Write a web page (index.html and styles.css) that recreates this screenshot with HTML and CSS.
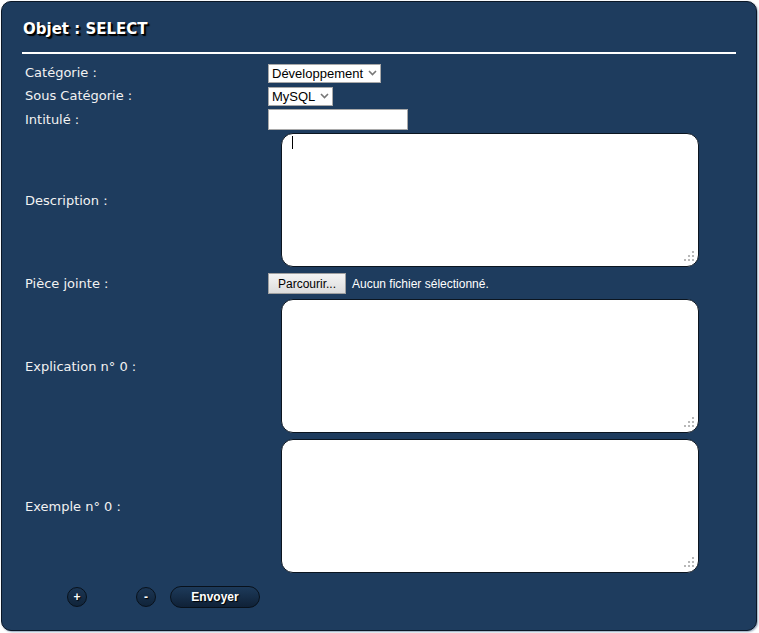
FILE: index.html
```html
<!DOCTYPE html>
<html lang="fr">
<head>
<meta charset="utf-8">
<title>Objet : SELECT</title>
<link rel="stylesheet" href="styles.css">
</head>
<body>
<div class="panel">
  <h1 class="title">Objet : SELECT</h1>
  <div class="rule"></div>
  <form class="form">
    <div class="row r-cat">
      <label class="lbl">Catégorie :</label>
      <div class="sel-wrap w1">
        <select class="sel"><option>Développement</option></select>
        <svg class="chev" width="9" height="6" viewBox="0 0 9 6"><path d="M1 1 L4.5 4.5 L8 1" fill="none" stroke="#777" stroke-width="1.6"/></svg>
      </div>
    </div>
    <div class="row r-sub">
      <label class="lbl">Sous Catégorie :</label>
      <div class="sel-wrap w2">
        <select class="sel"><option>MySQL</option></select>
        <svg class="chev" width="9" height="6" viewBox="0 0 9 6"><path d="M1 1 L4.5 4.5 L8 1" fill="none" stroke="#777" stroke-width="1.6"/></svg>
      </div>
    </div>
    <div class="row r-int">
      <label class="lbl">Intitulé :</label>
      <input class="txt" type="text">
    </div>
    <div class="row r-desc">
      <label class="lbl">Description :</label>
      <div class="ta-wrap">
        <textarea class="ta"></textarea>
        <span class="caret"></span>
        <svg class="grip" width="12" height="12" viewBox="0 0 12 12"><g fill="#b8b8b8"><rect x="9" y="0" width="2" height="2"/><rect x="9" y="4" width="2" height="2"/><rect x="5" y="4" width="2" height="2"/><rect x="9" y="8" width="2" height="2"/><rect x="5" y="8" width="2" height="2"/><rect x="1" y="8" width="2" height="2"/></g></svg>
      </div>
    </div>
    <div class="row r-file">
      <label class="lbl">Pièce jointe :</label>
      <div class="file">
        <button type="button" class="browse">Parcourir...</button>
        <span class="nofile">Aucun fichier sélectionné.</span>
      </div>
    </div>
    <div class="row r-expl">
      <label class="lbl">Explication n° 0 :</label>
      <div class="ta-wrap">
        <textarea class="ta"></textarea>
        <svg class="grip" width="12" height="12" viewBox="0 0 12 12"><g fill="#b8b8b8"><rect x="9" y="0" width="2" height="2"/><rect x="9" y="4" width="2" height="2"/><rect x="5" y="4" width="2" height="2"/><rect x="9" y="8" width="2" height="2"/><rect x="5" y="8" width="2" height="2"/><rect x="1" y="8" width="2" height="2"/></g></svg>
      </div>
    </div>
    <div class="row r-ex">
      <label class="lbl">Exemple n° 0 :</label>
      <div class="ta-wrap">
        <textarea class="ta"></textarea>
        <svg class="grip" width="12" height="12" viewBox="0 0 12 12"><g fill="#b8b8b8"><rect x="9" y="0" width="2" height="2"/><rect x="9" y="4" width="2" height="2"/><rect x="5" y="4" width="2" height="2"/><rect x="9" y="8" width="2" height="2"/><rect x="5" y="8" width="2" height="2"/><rect x="1" y="8" width="2" height="2"/></g></svg>
      </div>
    </div>
    <div class="actions">
      <button type="button" class="round plus">+</button>
      <button type="button" class="round minus">-</button>
      <button type="button" class="send">Envoyer</button>
    </div>
  </form>
</div>
</body>
</html>
```

FILE: styles.css
```css
* { box-sizing: border-box; }
html, body { margin: 0; padding: 0; background: #ffffff; }
body { width: 759px; height: 633px; overflow: hidden; }

.panel {
  margin: 1px 0 0 1px;
  width: 756px;
  height: 630px;
  background: #1e3c5e;
  border: 1px solid #0b1726;
  border-radius: 10px;
  box-shadow: 1px 1px 2px #8fa3ba;
  padding: 0 20px 0 20px;
  font-family: "DejaVu Sans", Verdana, sans-serif;
  color: #f2f2f2;
}

.title {
  margin: 0;
  padding: 18px 0 0 1px;
  height: 50px;
  font-family: "DejaVu Sans", Verdana, sans-serif;
  font-size: 15px;
  font-weight: bold;
  line-height: 19px;
  color: #ffffff;
  text-shadow: 1px 1px 0 #000000, 2px 2px 1px #000000;
}

.rule {
  height: 2px;
  background: #ffffff;
  margin: 0 0 0 0;
  width: 714px;
}

.form { display: flex; flex-direction: column; }

.row { display: flex; align-items: center; }
.lbl {
  flex: 0 0 246px;
  width: 246px;
  padding-left: 3px;
  font-size: 13px;
  color: #f2f2f2;
}

.r-cat { margin-top: 9px; }
.r-sub { margin-top: 4px; }
.r-int { margin-top: 4px; }
.r-desc { margin-top: 3px; }
.r-file { margin-top: 6px; }
.r-expl { margin-top: 5px; }
.r-ex { margin-top: 6px; }

.sel-wrap { position: relative; height: 19px; }
.w1 { width: 113px; }
.w2 { width: 65px; }
.sel {
  appearance: none;
  -webkit-appearance: none;
  width: 100%;
  height: 19px;
  border: 1px solid #a9a9a9;
  border-radius: 0;
  background: #ffffff;
  font-family: "Liberation Sans", Arial, sans-serif;
  font-size: 13px;
  color: #000000;
  padding: 0 0 0 3px;
  line-height: 17px;
}
.chev { position: absolute; right: 4px; top: 7px; pointer-events: none; }

.txt {
  width: 140px;
  height: 21px;
  border: 1px solid #a9a9a9;
  background: #ffffff;
  padding: 0 2px;
}

.ta-wrap { position: relative; margin-left: 13px; width: 418px; height: 134px; }
.ta {
  display: block;
  width: 418px;
  height: 134px;
  border: 1px solid #0b1520;
  border-radius: 12px;
  background: #ffffff;
  resize: none;
  padding: 2px;
  font-family: "Liberation Sans", Arial, sans-serif;
  font-size: 13px;
}
.caret {
  position: absolute;
  left: 11px;
  top: 3px;
  width: 1px;
  height: 13px;
  background: #000000;
}
.grip { position: absolute; right: 4px; bottom: 4px; }

.file { display: flex; align-items: center; }
.browse {
  height: 21px;
  width: 78px;
  border: 1px solid #a0a0a0;
  border-radius: 0;
  background: linear-gradient(#f4f4f4, #dcdcdc);
  font-family: "Liberation Sans", Arial, sans-serif;
  font-size: 12px;
  color: #000000;
  padding: 0;
}
.nofile {
  margin-left: 6px;
  font-family: "Liberation Sans", Arial, sans-serif;
  font-size: 12px;
  color: #ffffff;
}

.actions {
  display: flex;
  align-items: center;
  margin-top: 13px;
  padding-left: 45px;
}
.round {
  width: 20px;
  height: 20px;
  border-radius: 50%;
  border: 1px solid #08111b;
  background: linear-gradient(#1b3553, #10243a);
  color: #ffffff;
  font-family: "Liberation Sans", Arial, sans-serif;
  font-weight: bold;
  font-size: 12px;
  line-height: 18px;
  padding: 0;
  text-shadow: 1px 1px 1px #000;
}
.minus { margin-left: 49px; }
.send {
  margin-left: 14px;
  width: 90px;
  height: 22px;
  border-radius: 11px;
  border: 1px solid #08111b;
  background: linear-gradient(#1d3a5a, #0f2137);
  color: #ffffff;
  font-family: "Liberation Sans", Arial, sans-serif;
  font-weight: bold;
  font-size: 12px;
  padding: 0;
  text-shadow: 1px 1px 1px #000;
}
```
